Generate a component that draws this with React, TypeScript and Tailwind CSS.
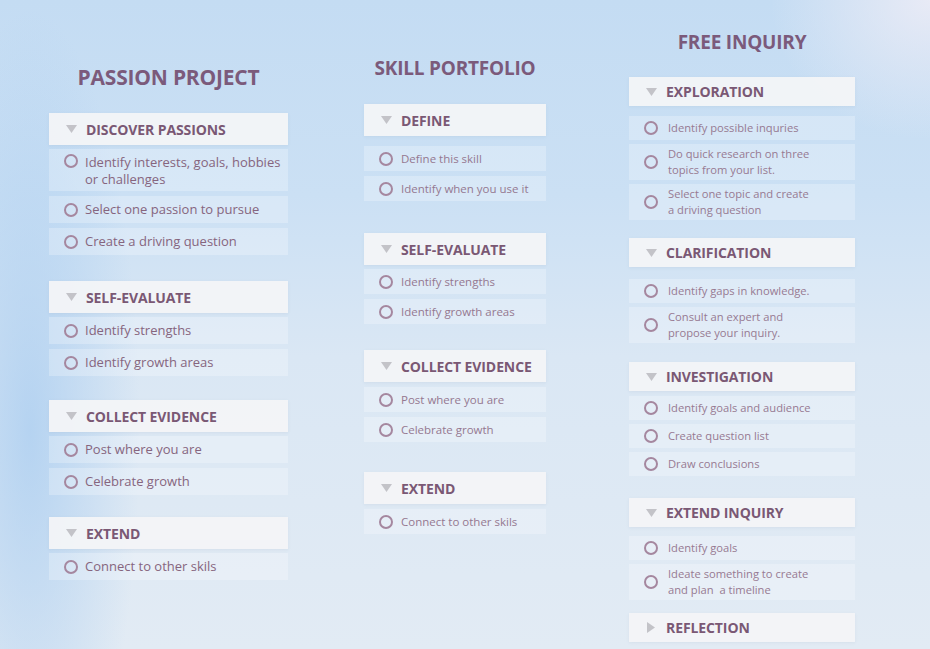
import React from "react";

type Item = { lines: string[] };
type Group = { label: string; open?: boolean; mt: string; first: string; items: Item[] };
type Col = {
  title: string;
  pt: string;
  titleMb: string;
  width: string;
  ml: string;
  titleSize: string;
  headerH: string;
  itemText: string;
  itemColor: string;
  singleH: string;
  doubleH: string;
  lineH: string;
  itemGap: string;
  textGap: string;
  doubleAlign: string;
  groups: Group[];
};

const cols: Col[] = [
  {
    title: "PASSION PROJECT",
    pt: "pt-[65px]",
    titleMb: "mb-[24px]",
    width: "w-[239px]",
    ml: "ml-[49px]",
    titleSize: "text-[21px]",
    headerH: "h-[32px]",
    itemText: "text-[13px]",
    itemColor: "text-[#86657e]",
    singleH: "h-[27px]",
    doubleH: "h-[42px]",
    lineH: "leading-[17px]",
    itemGap: "mt-[5px]",
    textGap: "gap-[7px]",
    doubleAlign: "items-start pt-[5px]",
    groups: [
      {
        label: "DISCOVER PASSIONS",
        mt: "mt-0",
        first: "mt-[4px]",
        items: [
          { lines: ["Identify interests, goals, hobbies", "or challenges"] },
          { lines: ["Select one passion to pursue"] },
          { lines: ["Create a driving question"] },
        ],
      },
      {
        label: "SELF-EVALUATE",
        mt: "mt-[26px]",
        first: "mt-[4px]",
        items: [{ lines: ["Identify strengths"] }, { lines: ["Identify growth areas"] }],
      },
      {
        label: "COLLECT EVIDENCE",
        mt: "mt-[24px]",
        first: "mt-[4px]",
        items: [{ lines: ["Post where you are"] }, { lines: ["Celebrate growth"] }],
      },
      {
        label: "EXTEND",
        mt: "mt-[22px]",
        first: "mt-[4px]",
        items: [{ lines: ["Connect to other skils"] }],
      },
    ],
  },
  {
    title: "SKILL PORTFOLIO",
    pt: "pt-[56px]",
    titleMb: "mb-[24px]",
    width: "w-[182px]",
    ml: "ml-[76px]",
    titleSize: "text-[19px]",
    headerH: "h-[32px]",
    itemText: "text-[11.5px]",
    itemColor: "text-[#957890]",
    singleH: "h-[25px]",
    doubleH: "h-[38px]",
    lineH: "leading-[16px]",
    itemGap: "mt-[5px]",
    textGap: "gap-[8px]",
    doubleAlign: "items-center",
    groups: [
      {
        label: "DEFINE",
        mt: "mt-0",
        first: "mt-[10px]",
        items: [{ lines: ["Define this skill"] }, { lines: ["Identify when you use it"] }],
      },
      {
        label: "SELF-EVALUATE",
        mt: "mt-[32px]",
        first: "mt-[4px]",
        items: [{ lines: ["Identify strengths"] }, { lines: ["Identify growth areas"] }],
      },
      {
        label: "COLLECT EVIDENCE",
        mt: "mt-[26px]",
        first: "mt-[5px]",
        items: [{ lines: ["Post where you are"] }, { lines: ["Celebrate growth"] }],
      },
      {
        label: "EXTEND",
        mt: "mt-[30px]",
        first: "mt-[5px]",
        items: [{ lines: ["Connect to other skils"] }],
      },
    ],
  },
  {
    title: "FREE INQUIRY",
    pt: "pt-[30px]",
    titleMb: "mb-[23px]",
    width: "w-[226px]",
    ml: "ml-[83px]",
    titleSize: "text-[19px]",
    headerH: "h-[29px]",
    itemText: "text-[11.2px]",
    itemColor: "text-[#977a92]",
    singleH: "h-[24px]",
    doubleH: "h-[36px]",
    lineH: "leading-[16px]",
    itemGap: "mt-[4px]",
    textGap: "gap-[10px]",
    doubleAlign: "items-center",
    groups: [
      {
        label: "EXPLORATION",
        mt: "mt-0",
        first: "mt-[10px]",
        items: [
          { lines: ["Identify possible inquries"] },
          { lines: ["Do quick research on three", "topics from your list."] },
          { lines: ["Select one topic and create", "a driving question"] },
        ],
      },
      {
        label: "CLARIFICATION",
        mt: "mt-[18px]",
        first: "mt-[12px]",
        items: [
          { lines: ["Identify gaps in knowledge."] },
          { lines: ["Consult an expert and", "propose your inquiry."] },
        ],
      },
      {
        label: "INVESTIGATION",
        mt: "mt-[19px]",
        first: "mt-[5px]",
        items: [
          { lines: ["Identify goals and audience"] },
          { lines: ["Create question list"] },
          { lines: ["Draw conclusions"] },
        ],
      },
      {
        label: "EXTEND INQUIRY",
        mt: "mt-[22px]",
        first: "mt-[9px]",
        items: [
          { lines: ["Identify goals"] },
          { lines: ["Ideate something to create", "and plan  a timeline"] },
        ],
      },
      {
        label: "REFLECTION",
        open: false,
        mt: "mt-[13px]",
        first: "mt-0",
        items: [],
      },
    ],
  },
];

function Tri({ open = true }: { open?: boolean }) {
  return open ? (
    <svg width="11" height="8" viewBox="0 0 11 8" className="shrink-0">
      <polygon points="0,0 11,0 5.5,8" fill="#c3c3c8" />
    </svg>
  ) : (
    <svg width="8" height="11" viewBox="0 0 8 11" className="shrink-0 ml-[1px] mr-[2px]">
      <polygon points="0,0 8,5.5 0,11" fill="#c3c3c8" />
    </svg>
  );
}

function Circle() {
  return (
    <span className="block w-[14px] h-[14px] rounded-full border-2 border-[#a5879f] shrink-0" />
  );
}

function Column({ c }: { c: Col }) {
  return (
    <div className={`${c.ml} ${c.width} ${c.pt} flex flex-col shrink-0`}>
      <div
        className={`${c.titleMb} h-[24px] leading-[24px] text-center font-bold ${c.titleSize} text-[#7b5a7b] tracking-[-0.2px] whitespace-nowrap`}
      >
        {c.title}
      </div>
      {c.groups.map((g) => (
        <div key={g.label} className={`${g.mt} flex flex-col`}>
          <div
            className={`${c.headerH} flex items-center gap-[9px] pl-[17px] bg-[#f3f4f7]/95 shadow-[0_1px_3px_rgba(120,140,170,0.1)]`}
          >
            <Tri open={g.open !== false} />
            <span className="font-bold text-[14px] text-[#7a5874] tracking-[-0.1px]">{g.label}</span>
          </div>
          {g.items.map((it, i) => (
            <div
              key={i}
              className={`${i === 0 ? g.first : c.itemGap} ${
                it.lines.length > 1 ? `${c.doubleH} ${c.doubleAlign}` : `${c.singleH} items-center`
              } flex ${c.textGap} pl-[15px] bg-white/25`}
            >
              <Circle />
              <div className={`${c.itemText} ${c.lineH} ${c.itemColor} whitespace-pre`}>
                {it.lines.map((l, j) => (
                  <div key={j}>{l}</div>
                ))}
              </div>
            </div>
          ))}
        </div>
      ))}
    </div>
  );
}

export default function App() {
  return (
    <div
      className="w-[930px] h-[649px] overflow-hidden flex items-start bg-[radial-gradient(ellipse_110px_420px_at_30px_430px,rgba(168,204,240,0.75),transparent),radial-gradient(ellipse_160px_140px_at_930px_0px,rgba(236,236,246,0.9),transparent),linear-gradient(180deg,#c4dcf3_0%,#cbe0f4_30%,#dae7f4_55%,#e2ebf4_100%)]"
      style={{ fontFamily: '"Open Sans", "Noto Sans", sans-serif' }}
    >
      {cols.map((c) => (
        <Column key={c.title} c={c} />
      ))}
    </div>
  );
}
